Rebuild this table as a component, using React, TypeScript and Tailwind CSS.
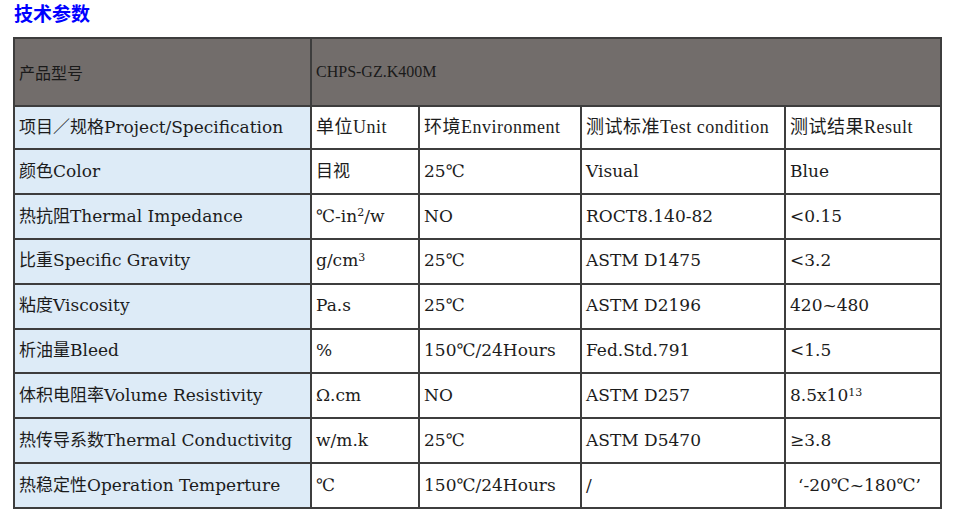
import React from "react";

type Row = {
  name: string;
  unit: React.ReactNode;
  env: string;
  test: string;
  result: React.ReactNode;
};

const rows: Row[] = [
  { name: "颜色Color", unit: "目视", env: "25℃", test: "Visual", result: "Blue" },
  {
    name: "热抗阻Thermal Impedance",
    unit: (
      <>
        ℃-in<sup className="text-[11px]">2</sup>/w
      </>
    ),
    env: "NO",
    test: "ROCT8.140-82",
    result: "<0.15",
  },
  {
    name: "比重Specific Gravity",
    unit: (
      <>
        g/cm<sup className="text-[11px]">3</sup>
      </>
    ),
    env: "25℃",
    test: "ASTM D1475",
    result: "<3.2",
  },
  { name: "粘度Viscosity", unit: "Pa.s", env: "25℃", test: "ASTM D2196", result: "420~480" },
  { name: "析油量Bleed", unit: "%", env: "150℃/24Hours", test: "Fed.Std.791", result: "<1.5" },
  {
    name: "体积电阻率Volume Resistivity",
    unit: "Ω.cm",
    env: "NO",
    test: "ASTM D257",
    result: (
      <>
        8.5x10<sup className="text-[11px]">13</sup>
      </>
    ),
  },
  { name: "热传导系数Thermal Conductivitg", unit: "w/m.k", env: "25℃", test: "ASTM D5470", result: "≥3.8" },
  {
    name: "热稳定性Operation Temperture",
    unit: "℃",
    env: "150℃/24Hours",
    test: "/",
    result: <span className="pl-2">‘-20℃~180℃’</span>,
  },
];

const serif = "font-['DejaVu_Serif','Noto_Sans_CJK_SC',serif]";
const times = "font-['Liberation_Serif','Noto_Sans_CJK_SC',serif]";
const cell = "border-2 border-[#3d3d3d] px-[4px] align-middle whitespace-nowrap overflow-hidden";

export default function App() {
  return (
    <div className="w-[953px] h-[518px] bg-white overflow-hidden text-[#1c1c1c]">
      <h2 className="pl-[14px] pt-[1px] h-[37px] text-[19px] font-bold leading-[24px] text-[#0000ff] font-['Noto_Sans_CJK_SC',sans-serif]">
        技术参数
      </h2>
      <table className="ml-[13px] border-collapse table-fixed w-[927px]">
        <colgroup>
          <col className="w-[297px]" />
          <col className="w-[108px]" />
          <col className="w-[162px]" />
          <col className="w-[204px]" />
          <col className="w-[156px]" />
        </colgroup>
        <tbody>
          <tr className="h-[68px] bg-[#726d6b]">
            <td className={`${cell} text-[16px] font-['Noto_Sans_CJK_SC',sans-serif] text-[#1a1a1a]`}>产品型号</td>
            <td colSpan={4} className={`${cell} ${times} text-[16px] text-[#1a1a1a]`}>
              CHPS-GZ.K400M
            </td>
          </tr>
          <tr className="h-[43px]">
            <td className={`${cell} ${serif} text-[17px] bg-[#ddebf7]`}>项目／规格Project/Specification</td>
            <td className={`${cell} ${times} text-[18px] tracking-[0.5px]`}>单位Unit</td>
            <td className={`${cell} ${times} text-[18px] tracking-[0.5px]`}>环境Environment</td>
            <td className={`${cell} ${times} text-[18px] tracking-[0.5px]`}>测试标准Test condition</td>
            <td className={`${cell} ${times} text-[18px] tracking-[0.5px]`}>测试结果Result</td>
          </tr>
          {rows.map((r) => (
            <tr key={r.name} className="h-[44.9px]">
              <td className={`${cell} ${serif} text-[17px] bg-[#ddebf7]`}>{r.name}</td>
              <td className={`${cell} ${serif} text-[17px]`}>{r.unit}</td>
              <td className={`${cell} ${serif} text-[17px]`}>{r.env}</td>
              <td className={`${cell} ${serif} text-[17px]`}>{r.test}</td>
              <td className={`${cell} ${serif} text-[17px]`}>{r.result}</td>
            </tr>
          ))}
        </tbody>
      </table>
    </div>
  );
}
